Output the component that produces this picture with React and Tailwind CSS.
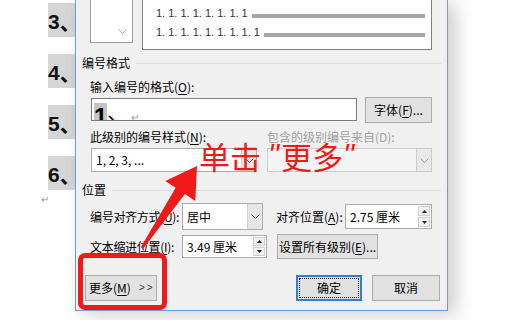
import React from 'react'

const cjk = "font-['Noto_Sans_CJK_SC','Noto_Sans',sans-serif]"

function Chevron({ color = '#606060' }) {
  return (
    <svg width="9" height="5" viewBox="0 0 9 5" fill="none">
      <polyline points="0.5,0.5 4.5,4.5 8.5,0.5" stroke={color} strokeWidth="1" />
    </svg>
  )
}

function U({ children }) {
  return <span className="underline underline-offset-2">{children}</span>
}

function Select({ className, value, disabled }) {
  return (
    <div className={`relative flex border ${disabled ? 'border-[#cccccc] bg-[#f4f4f4]' : 'border-[#acacac] bg-white'} ${className}`}>
      <div className="flex flex-1 items-center px-[4px]">{value}</div>
      <div className={`flex w-[15px] items-center justify-center border-l ${disabled ? 'border-[#cccccc] bg-[#e8e8e8]' : 'border-[#cfcfcf] bg-[#e6e6e6]'}`}>
        <Chevron color={disabled ? '#9a9a9a' : '#606060'} />
      </div>
    </div>
  )
}

function Spin({ className, value }) {
  return (
    <div className={`flex border border-[#acacac] bg-white ${className}`}>
      <div className="flex flex-1 items-center px-[4px]">{value}</div>
      <div className="flex w-[14px] flex-col gap-px p-px">
        <div className="flex flex-1 items-center justify-center border border-[#cfcfcf] bg-[#f0f0f0]">
          <svg width="5" height="3" viewBox="0 0 5 3"><polygon points="2.5,0 5,3 0,3" fill="#222" /></svg>
        </div>
        <div className="flex flex-1 items-center justify-center border border-[#cfcfcf] bg-[#f0f0f0]">
          <svg width="5" height="3" viewBox="0 0 5 3"><polygon points="0,0 5,0 2.5,3" fill="#222" /></svg>
        </div>
      </div>
    </div>
  )
}

function Button({ className, children }) {
  return (
    <div className={`flex items-center justify-center border border-[#adadad] bg-[#e1e1e1] ${className}`}>
      {children}
    </div>
  )
}

function Group({ label }) {
  return (
    <div className="flex h-[14px] items-center pl-[6px] pr-[6px]">
      <span>{label}</span>
      <div className="ml-[6px] h-px flex-1 bg-[#dcdcdc]" />
    </div>
  )
}

function PreviewRow({ text }) {
  return (
    <div className="flex h-[19px] shrink-0 items-center pr-[6px]">
      <span className="font-['Liberation_Sans',sans-serif] text-[11px] leading-[11px] text-[#333]">{text}</span>
      <div className="ml-[4px] mt-[4px] h-[4px] flex-1 bg-[#a6a6a6]" />
    </div>
  )
}

export default function App() {
  return (
    <div className={`relative h-[320px] w-[510px] overflow-hidden bg-white ${cjk}`}>
      {/* document behind */}
      <div className="flex flex-col gap-[17px] pl-[48px] pt-[3px]">
        {['3', '4', '5', '6'].map((n) => (
          <div key={n} className="flex h-[34px] w-[40px] items-center bg-[#d6d6d6] pt-[3px] text-[21px] font-bold text-[#111]">
            <span className="font-['Liberation_Sans',sans-serif]">{n}</span>
            <span>、</span>
          </div>
        ))}
      </div>
      <div className="pl-[41px] pt-[4px] text-[10px] leading-[10px] text-[#999]">↵</div>

      {/* dialog */}
      <div className="absolute left-[75px] top-0 h-[311px] w-[373px] border-x border-b border-[#6a9fd6] bg-[#f0f0f0] text-[12px] leading-[14px] text-black shadow-[8px_4px_18px_rgba(0,0,0,0.2)]">
        <div className="flex h-[50px] items-start">
          <div className="relative ml-[14px] h-[43px] w-[43px] border-x border-b border-[#a0a0a0] bg-white">
            <div className="absolute bottom-[8px] right-[5px]">
              <Chevron color="#b0b0b0" />
            </div>
          </div>
          <div className="ml-[9px] flex h-[50px] w-[290px] flex-col justify-end overflow-hidden border-x border-b border-[#828282] bg-white pb-[7px] pl-[13px]">
            <PreviewRow text="1. 1. 1. 1. 1. 1. 1" />
            <PreviewRow text="1. 1. 1. 1. 1. 1. 1. 1" />
            <PreviewRow text="1. 1. 1. 1. 1. 1. 1. 1. 1" />
          </div>
        </div>

        <div className="mt-[6px]">
          <Group label="编号格式" />
        </div>
        <div className="mt-[10px] h-[14px] pl-[14px]">
          输入编号的格式(<U>O</U>):
        </div>
        <div className="mt-[3px] flex h-[26px] pl-[15px]">
          <div className="mt-[1px] h-[23px] w-[266px] overflow-hidden border border-[#7a7a7a] bg-white pl-[2px] pt-[3px]">
            <div className="whitespace-nowrap text-[24px] leading-[24px]">
              <span className="bg-[#c4c4c4] font-['Liberation_Sans',sans-serif] font-bold">1</span>
              <span className="align-[5px] text-[20px] leading-[20px]">、</span>
              <span className="ml-[4px] align-[4px] text-[10px] leading-[10px] text-[#999]">↵</span>
            </div>
          </div>
          <Button className="ml-[8px] h-[26px] w-[67px]">
            字体(<U>F</U>)...
          </Button>
        </div>

        <div className="mt-[7px] flex h-[14px]">
          <div className="w-[191px] pl-[14px]">
            此级别的编号样式(<U>N</U>):
          </div>
          <div className="text-[#a0a0a0]">包含的级别编号来自(D):</div>
        </div>
        <div className="mt-[4px] flex h-[24px] pl-[15px]">
          <Select className="h-[24px] w-[166px]" value="1, 2, 3, ..." />
          <Select className="ml-[10px] h-[24px] w-[165px]" value="" disabled />
        </div>

        <div className="mt-[11px]">
          <Group label="位置" />
        </div>
        <div className="mt-[6px] flex h-[27px] items-center">
          <div className="w-[106px] shrink-0 whitespace-nowrap pl-[14px] tracking-[-0.3px]">
            编号对齐方式(<U>U</U>):
          </div>
          <Select className="h-[27px] w-[81px] shrink-0" value="居中" />
          <div className="ml-[13px] w-[69px] shrink-0 whitespace-nowrap">
            对齐位置(<U>A</U>):
          </div>
          <Spin className="h-[25px] w-[87px]" value="2.75 厘米" />
        </div>
        <div className="mt-[4px] flex h-[25px] items-center">
          <div className="w-[106px] shrink-0 whitespace-nowrap pl-[14px] tracking-[-0.3px]">
            文本缩进位置(<U>I</U>):
          </div>
          <Spin className="h-[23px] w-[85px]" value="3.49 厘米" />
          <Button className="ml-[10px] h-[25px] w-[101px]">
            设置所有级别(<U>E</U>)...
          </Button>
        </div>

        <div className="mt-[16px] flex h-[26px]">
          <div className="ml-[9px] flex h-[26px] w-[72px] items-center border border-[#adadad] bg-[#e1e1e1] pl-[3px]">
            更多(<U>M</U>)
            <span className="ml-[8px] font-['Liberation_Sans',sans-serif] text-[10px] tracking-[2px] text-[#333]">&gt;&gt;</span>
          </div>
          <div className="ml-[139px] flex h-[26px] w-[66px] items-center justify-center border-2 border-[#2f7fd0] bg-[#e1e1e1] p-px">
            <div className="flex h-full w-full items-center justify-center border border-dotted border-black">确定</div>
          </div>
          <Button className="ml-[10px] h-[26px] w-[68px]">取消</Button>
        </div>
      </div>

      {/* red annotation */}
      <svg className="pointer-events-none absolute left-0 top-0" width="510" height="320" viewBox="0 0 510 320">
        <polygon
          points="140.8,247.2 175.7,187.8 165.3,180.9 197,166 195.3,200.9 184.9,194 143.2,248.8"
          fill="#f01a1a"
        />
      </svg>
      <div className="pointer-events-none absolute left-[199px] top-[136px] flex items-center whitespace-nowrap text-[31px] leading-[40px] text-[#f01a1a]">
        <span>单击</span>
        <span className="ml-[7px] font-['Liberation_Sans',sans-serif] italic">"</span>
        <span className="ml-[2px]">更多</span>
        <span className="font-['Liberation_Sans',sans-serif] italic">"</span>
      </div>
      <div className="pointer-events-none absolute left-[78px] top-[253px] h-[57px] w-[89px] rounded-[7px] border-[5px] border-[#f01a1a]" />
    </div>
  )
}
